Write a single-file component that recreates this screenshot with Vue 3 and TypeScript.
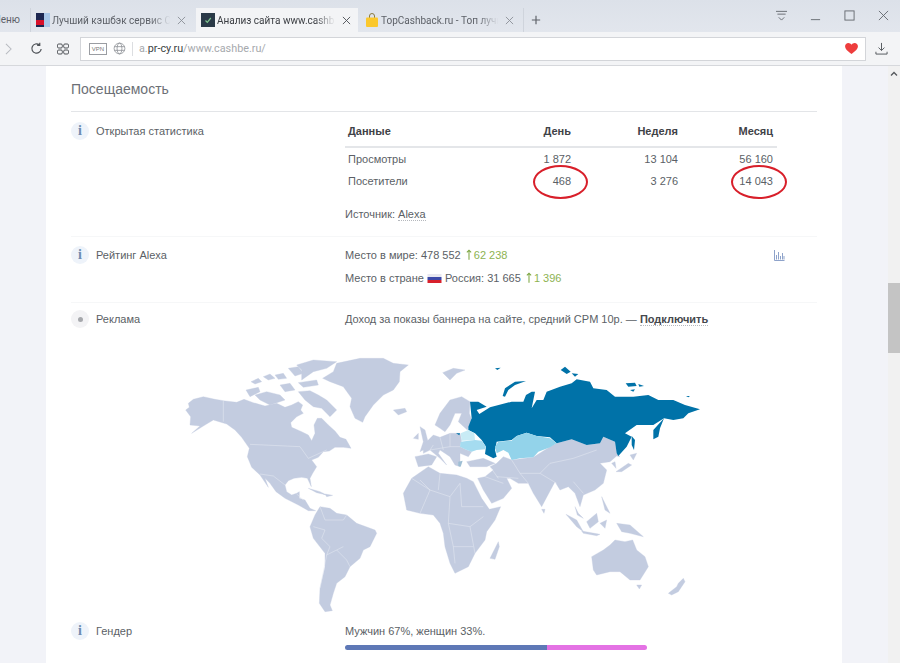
<script setup lang="ts">
interface StatRow {
  name: string
  day: string
  week: string
  month: string
}

const rows: StatRow[] = [
  { name: 'Просмотры', day: '1 872', week: '13 104', month: '56 160' },
  { name: 'Посетители', day: '468', week: '3 276', month: '14 043' }
]

// map shapes, traced in 3x coordinates
const westLand = [
  'M47,180 L58,172 L55,160 L70,148 L100,140 L135,148 L160,152 L200,157 L222,148 L250,158 L285,168 L320,160 L345,172 L365,165 L385,155 L398,165 L392,180 L400,190 L380,200 L362,218 L365,232 L395,245 L415,255 L425,272 L435,250 L432,225 L442,205 L455,205 L475,225 L495,243 L510,262 L528,268 L543,295 L520,292 L495,292 L478,303 L460,305 L445,322 L425,330 L440,350 L428,370 L420,385 L424,410 L412,385 L395,382 L372,385 L355,392 L345,405 L350,425 L365,435 L380,430 L388,425 L388,445 L405,450 L420,475 L437,482 L415,482 L385,465 L345,445 L318,425 L300,400 L285,385 L295,412 L270,375 L245,352 L232,320 L238,295 L215,262 L195,240 L170,222 L130,210 L105,225 L65,250 L90,228 L60,225 L62,200 Z',
  'M385,125 L420,122 L445,135 L470,150 L500,180 L480,200 L455,175 L430,170 L405,150 Z',
  'M228,120 L265,112 L270,125 L240,140 Z',
  'M255,135 L290,125 L330,135 L345,150 L300,165 L270,150 Z',
  'M243,95 L265,85 L275,95 L255,102 Z',
  'M280,80 L300,72 L315,85 L295,90 Z',
  'M315,75 L340,70 L350,85 L325,88 Z',
  'M355,55 L385,50 L400,70 L375,78 Z',
  'M380,45 L430,30 L500,35 L470,55 L430,65 L395,90 L395,60 Z',
  'M330,105 L360,100 L375,120 L345,125 Z',
  'M385,98 L440,90 L445,105 L400,112 Z',
  'M415,415 L450,425 L470,435 L440,428 Z',
  'M465,432 L488,436 L470,440 Z',
  'M458,85 L490,65 L500,40 L570,25 L640,25 L670,40 L715,45 L690,65 L688,95 L670,120 L640,135 L610,165 L585,200 L578,217 L555,205 L540,170 L545,145 L520,110 L480,95 Z',
  'M670,180 L705,175 L710,185 L685,195 Z',
  'M420,530 L435,495 L450,470 L480,475 L500,490 L530,495 L560,520 L615,540 L620,550 L600,590 L580,600 L570,625 L540,650 L525,680 L500,700 L490,730 L480,765 L487,782 L465,785 L448,760 L450,715 L465,650 L465,610 L430,565 Z',
  'M750,230 L765,240 L778,290 L750,305 L760,275 Z',
  'M730,265 L745,250 L745,268 Z',
  'M735,320 L775,312 L800,320 L785,345 L745,350 Z'
]

const westBorders =
  'M160,152 L160,215 M240,283 L390,290 L415,325 L470,300 M270,372 L310,378 L345,405 M450,470 L465,510 L520,510 M530,495 L520,510 M430,530 L465,540 L455,565 L480,590 L470,615 L500,600 L530,630 L540,650 M470,615 L450,715 M380,432 L400,450 M500,600 L520,590'

const eastLand = [
  'M-110,430 L-85,385 L-35,350 L0,370 L50,375 L80,385 L100,395 L125,445 L148,478 L182,470 L165,510 L140,545 L135,570 L105,610 L85,650 L45,670 L30,640 L15,590 L10,550 L0,520 L-20,495 L-60,490 L-100,480 Z',
  'M150,625 L175,575 L178,590 L165,628 Z',
  'M-15,225 L0,190 L30,150 L65,140 L90,155 L88,190 L95,210 L82,240 L55,215 L65,190 L45,190 L30,225 L15,245 L0,235 Z',
  'M-50,285 L-20,255 L0,262 L30,250 L60,250 L65,270 L60,290 L75,298 L95,305 L85,320 L60,310 L60,350 L45,345 L30,320 L0,300 L-5,310 L20,345 L0,325 L-30,300 L-50,310 Z',
  'M80,335 L130,325 L165,340 L140,350 L90,350 Z',
  'M170,340 L190,320 L215,330 L280,322 L330,290 L350,280 L395,268 L440,285 L480,280 L490,260 L525,275 L530,310 L540,320 L530,318 L510,335 L480,340 L500,360 L490,400 L465,420 L430,435 L420,470 L405,430 L385,410 L360,420 L345,395 L305,470 L280,430 L265,400 L235,400 L210,385 L200,385 L215,415 L190,445 L155,460 L130,420 L113,385 L135,380 L160,360 L150,350 Z',
  'M528,365 L565,340 L575,345 L545,365 Z',
  'M570,315 L590,310 L580,330 Z',
  'M515,340 L525,335 L528,355 Z',
  'M378,493 L410,510 L430,545 L410,530 Z',
  'M425,543 L480,553 L470,557 L430,550 Z',
  'M440,515 L470,490 L475,515 L450,535 Z',
  'M480,520 L500,510 L495,535 Z',
  'M530,520 L570,525 L610,560 L570,550 L545,545 Z',
  'M485,440 L500,470 L510,490 L495,480 Z',
  'M305,478 L315,478 L312,490 Z',
  'M405,470 L415,490 L430,505 L412,495 Z',
  'M455,620 L490,600 L510,585 L525,570 L555,575 L578,570 L590,600 L615,620 L625,650 L600,690 L570,690 L540,665 L510,665 L470,675 L460,660 Z',
  'M590,705 L605,705 L598,717 Z',
  'M685,730 L710,710 L715,700 L730,685 L735,695 L715,725 L695,735 Z',
  'M8,68 L40,55 L75,60 L50,70 L30,90 Z'
]

const eastBorders =
  'M-60,390 L-30,420 L-60,490 M-30,420 L30,440 L60,400 M30,440 L25,520 L90,530 L130,500 M60,400 L65,470 L130,470 M25,520 L40,590 L100,590 M0,370 L-5,420 M-85,385 L-30,420 M40,590 L45,640 M90,530 L105,610 M215,330 L240,370 L300,370 L350,400 M300,370 L330,340 L400,325 L470,300 M170,380 L235,385 M240,370 L265,400 M400,395 L430,430 M150,350 L175,385 M135,380 L190,400 M-30,300 L30,290 L60,290 M0,262 L10,300 M-20,285 L-30,300 M30,250 L30,290'

const russia = [
  'M85,230 L95,205 L90,155 L115,155 L140,170 L110,180 L118,192 L150,172 L215,155 L250,155 L258,135 L275,125 L285,125 L275,175 L290,150 L310,150 L320,125 L360,110 L395,100 L410,88 L450,95 L460,115 L500,120 L525,140 L580,140 L625,135 L655,150 L700,150 L735,165 L780,178 L745,190 L730,205 L700,210 L672,205 L640,225 L590,225 L555,250 L575,260 L560,290 L535,318 L530,310 L525,275 L490,260 L480,280 L440,285 L395,268 L350,280 L330,262 L290,258 L260,248 L230,258 L215,270 L170,275 L165,300 L170,320 L160,325 L135,312 L138,290 L125,270 L105,250 L85,240 Z',
  'M640,268 L640,240 L672,205 L660,235 L655,260 Z',
  'M575,258 L585,270 L582,300 L575,285 Z',
  'M188,138 L195,115 L225,95 L258,93 L225,105 L205,120 L195,140 Z',
  'M362,60 L375,50 L392,65 L380,72 Z',
  'M395,70 L415,72 L405,80 Z',
  'M557,100 L585,98 L590,108 L565,110 Z',
  'M595,102 L612,108 L598,110 Z',
  'M165,55 L182,53 L172,60 Z',
  'M570,120 L585,118 L580,125 Z',
  'M738,138 L750,138 L745,142 Z',
  'M48,250 L60,250 L58,256 Z'
]
</script>

<template>
  <div class="browser">
    <div class="tabbar">
      <div class="menu-tab">Меню</div>
      <div class="tab tab-first">
        <span class="fav fav-red"></span>
        <span class="tab-title">Лучший кэшбэк сервис С</span>
        <svg class="tab-close" viewBox="0 0 10 10"><path d="M1 1 9 9M9 1 1 9" /></svg>
      </div>
      <div class="tab tab-active">
        <span class="fav fav-check">
          <svg viewBox="0 0 14 14"><path d="M4.5 7.5 6.3 9.3 9.8 5" /></svg>
        </span>
        <span class="tab-title">Анализ сайта www.cashbe</span>
        <svg class="tab-close dark" viewBox="0 0 10 10"><path d="M1 1 9 9M9 1 1 9" /></svg>
      </div>
      <div class="tab tab-third">
        <svg class="fav" viewBox="0 0 14 14">
          <path class="bag-handle" d="M4.5 5V3a2.5 2.5 0 0 1 5 0v2" />
          <rect class="bag" x="1" y="4.5" width="12" height="9.5" rx="1" />
        </svg>
        <span class="tab-title">TopCashback.ru - Топ лучш</span>
        <svg class="tab-close" viewBox="0 0 10 10"><path d="M1 1 9 9M9 1 1 9" /></svg>
      </div>
      <svg class="new-tab" viewBox="0 0 12 12"><path d="M6 1V11M1 6H11" /></svg>
      <div class="win-controls">
        <svg viewBox="0 0 14 12" class="win-menu"><path d="M1 1.5H13M2.5 4.5H11.5M4 8 7 11 10 8" /></svg>
        <svg viewBox="0 0 12 12" class="win-min"><path d="M1 10.5H11" /></svg>
        <svg viewBox="0 0 12 12" class="win-max"><rect x="1" y="1" width="10" height="10" /></svg>
        <svg viewBox="0 0 12 12" class="win-close"><path d="M1 1 11 11M11 1 1 11" /></svg>
      </div>
    </div>

    <div class="toolbar">
      <svg class="nav-forward" viewBox="0 0 8 14"><path d="M1 1 7 7 1 13" /></svg>
      <svg class="nav-reload" viewBox="0 0 14 14"><path d="M12 7.5A5 5 0 1 1 10 3M10.5 .8V3.6H7.7" /></svg>
      <svg class="nav-grid" viewBox="0 0 12 12">
        <rect x=".5" y="1" width="4.8" height="4" rx="1.2" />
        <rect x="6.7" y="1" width="4.8" height="4" rx="1.2" />
        <rect x=".5" y="7" width="4.8" height="4" rx="1.2" />
        <rect x="6.7" y="7" width="4.8" height="4" rx="1.2" />
      </svg>
      <div class="address">
        <span class="vpn">VPN</span>
        <svg class="globe" viewBox="0 0 14 14">
          <circle cx="7" cy="7" r="5.8" />
          <ellipse cx="7" cy="7" rx="2.6" ry="5.8" />
          <path d="M1.5 5H12.5M1.5 9H12.5" />
        </svg>
        <span class="addr-sep"></span>
        <span class="url"><span class="url-dim">a.</span><span class="url-host">pr-cy.ru</span><span class="url-dim">/www.cashbe.ru/</span></span>
        <svg class="heart" viewBox="0 0 14 12"><path d="M7 12C3 9 0 6.800 0 3.600 0 1.500 1.600 0 3.600 0 5 0 6.300.8 7 2 7.700.8 9 0 10.400 0 12.400 0 14 1.500 14 3.600 14 6.800 11 9 7 12Z" /></svg>
      </div>
      <svg class="download" viewBox="0 0 14 14"><path d="M7 1V9M3.800 6 7 9.200 10.200 6M1 10.500V13H13V10.500" /></svg>
    </div>

    <div class="viewport">
      <div class="gutter"></div>
      <main class="card">
        <h2 class="section-title">Посещаемость</h2>

        <section class="row row-stats">
          <div class="row-label"><span class="badge">i</span>Открытая статистика</div>
          <div class="row-body">
            <div class="stats">
              <div class="stats-head">
                <span class="col-name">Данные</span>
                <span class="col-num col-day">День</span>
                <span class="col-num col-week">Неделя</span>
                <span class="col-num col-month">Месяц</span>
              </div>
              <div v-for="r in rows" :key="r.name" class="stats-row">
                <span class="col-name">{{ r.name }}</span>
                <span class="col-num col-day">{{ r.day }}</span>
                <span class="col-num col-week">{{ r.week }}</span>
                <span class="col-num col-month">{{ r.month }}</span>
              </div>
              <span class="circle circle-day"></span>
              <span class="circle circle-month"></span>
            </div>
            <div class="source">Источник: <span class="dotted">Alexa</span></div>
          </div>
        </section>

        <section class="row row-alexa">
          <div class="row-label"><span class="badge">i</span>Рейтинг Alexa</div>
          <div class="row-body">
            <div class="line">
              Место в мире: 478 552
              <span class="up">
                <svg viewBox="0 0 7 12"><path d="M3.500 12V1M1 3.500 3.500 1 6 3.500" /></svg>62 238
              </span>
            </div>
            <div class="line line-second">
              Место в стране
              <svg class="flag" viewBox="0 0 14 9">
                <rect width="14" height="3" fill="#e8e8f0" />
                <rect y="3" width="14" height="3" fill="#3c49a8" />
                <rect y="6" width="14" height="3" fill="#d8202c" />
              </svg>
              Россия: 31 665
              <span class="up">
                <svg viewBox="0 0 7 12"><path d="M3.500 12V1M1 3.500 3.500 1 6 3.500" /></svg>1 396
              </span>
            </div>
          </div>
          <svg class="bars-icon" viewBox="0 0 11 11">
            <path d="M.5 0V10.500H10.500M2.500 9.500V5M4.500 9.500V2M6.500 9.500V6M8.500 9.500V3M10 9.500V6" />
          </svg>
        </section>

        <section class="row row-ad">
          <div class="row-label"><span class="badge badge-grey"><i class="dot"></i></span>Реклама</div>
          <div class="row-body">
            Доход за показы баннера на сайте, средний CPM 10р. — <b class="connect">Подключить</b>
          </div>
        </section>

        <svg class="world" viewBox="0 0 1650 810" width="550" height="270">
          <g class="land">
            <path v-for="(d, i) in westLand" :key="i" :d="d" />
            <g transform="translate(810 0)">
              <path v-for="(d, i) in eastLand" :key="i" :d="d" />
            </g>
          </g>
          <path class="borders" :d="westBorders" />
          <g transform="translate(810 0)">
            <path class="borders" :d="eastBorders" />
            <path v-for="(d, i) in russia" :key="i" class="ru" :d="d" />
            <path class="kz" d="M165,290 L175,275 L215,272 L230,258 L260,248 L290,258 L330,265 L350,280 L330,292 L295,305 L280,322 L240,325 L215,330 L205,308 L190,300 L170,310 Z" />
            <path class="by" d="M62,250 L85,240 L103,250 L105,270 L65,272 Z" />
            <path class="ua" d="M62,275 L105,270 L125,272 L138,290 L135,298 L110,300 L95,305 L75,298 L60,290 Z" />
            <path class="gr" d="M55,335 L68,332 L62,350 L55,348 Z" />
          </g>
        </svg>

        <section class="row row-gender">
          <div class="row-label"><span class="badge">i</span>Гендер</div>
          <div class="row-body">
            Мужчин 67%, женщин 33%.
            <div class="gender-bar">
              <span class="male" :style="{ width: '67%' }"></span>
              <span class="female"></span>
            </div>
          </div>
        </section>
      </main>
      <div class="gutter gutter-right"></div>
      <div class="scrollbar">
        <svg class="scroll-up" viewBox="0 0 8 5"><path d="M1 4.500 4 1.500 7 4.500" /></svg>
        <div class="scroll-thumb"></div>
      </div>
    </div>
  </div>
</template>

<style scoped>
.browser {
  width: 900px;
  height: 663px;
  display: flex;
  flex-direction: column;
  overflow: hidden;
  font-family: "Liberation Sans", Arial, sans-serif;
  font-size: 11px;
  color: #5b5f66;
}

.tabbar {
  height: 32px;
  display: flex;
  align-items: flex-end;
  flex: none;
  background: linear-gradient(#dce1e9, #e2e6ed);
  font-family: Roboto, sans-serif;
  font-size: 10px;
  color: #5d6168;
}

.menu-tab {
  width: 31px;
  height: 24px;
  line-height: 24px;
  flex: none;
  overflow: hidden;
  text-indent: -8px;
  border-right: 1px solid #cfd4dc;
  box-sizing: border-box;
}

.tab {
  height: 24px;
  display: flex;
  align-items: center;
  flex: none;
  box-sizing: border-box;
}

.tab-first {
  width: 165px;
  padding: 0 10px 0 5px;
}

.tab-active {
  width: 162px;
  padding: 0 7px 0 5px;
  background: #f3f4f6;
  color: #3a3d42;
}

.tab-third {
  width: 166px;
  padding: 0 9px 0 7px;
  border-right: 1px solid #cfd4dc;
}

.fav {
  width: 14px;
  height: 14px;
  flex: none;
  margin-right: 2px;
  display: block;
}

.fav-red {
  background:
    linear-gradient(90deg, transparent 60%, #a9c7e8 60%),
    linear-gradient(#1c2650 50%, #d8102a 50%, #d8102a 85%, #1c2650 85%);
}

.fav-check {
  background: #2a3a48;
}

.fav-check svg {
  display: block;
  fill: none;
  stroke: #7fc48f;
  stroke-width: 1.2;
}

.bag {
  fill: #fbc82c;
}

.bag-handle {
  fill: none;
  stroke: #8a7a40;
  stroke-width: 1;
}

.tab-title {
  flex: 1;
  min-width: 0;
  white-space: nowrap;
  overflow: hidden;
  -webkit-mask-image: linear-gradient(90deg, #000 80%, transparent 97%);
  mask-image: linear-gradient(90deg, #000 80%, transparent 97%);
}

.tab-close {
  width: 9px;
  height: 9px;
  margin-left: 3px;
  flex: none;
  fill: none;
  stroke: #8b9097;
  stroke-width: 1;
}

.tab-close.dark {
  stroke: #4a4d52;
}

.new-tab {
  width: 10px;
  height: 10px;
  margin: 0 0 7px 7px;
  fill: none;
  stroke: #5d6168;
  stroke-width: 1.4;
}

.win-controls {
  margin-left: auto;
  align-self: stretch;
  display: flex;
  align-items: flex-start;
  padding: 10px 11px 0 0;
}

.win-controls svg {
  fill: none;
  stroke: #64686e;
  stroke-width: 1;
  display: block;
}

.win-menu {
  width: 13px;
  height: 11px;
  margin-right: 22px;
}

.win-min {
  width: 11px;
  height: 11px;
  margin-right: 23px;
}

.win-max {
  width: 11px;
  height: 11px;
  margin-right: 23px;
}

.win-close {
  width: 11px;
  height: 11px;
}

.toolbar {
  height: 34px;
  flex: none;
  display: flex;
  align-items: center;
  box-sizing: border-box;
  background: #f3f4f6;
  border-bottom: 1px solid #d6d8dc;
}

.nav-forward {
  width: 7px;
  height: 12px;
  margin-left: 5px;
  fill: none;
  stroke: #b8bbc0;
  stroke-width: 1.2;
}

.nav-reload {
  width: 13px;
  height: 13px;
  margin-left: 18px;
  fill: none;
  stroke: #4e5257;
  stroke-width: 1.3;
}

.nav-grid {
  width: 12px;
  height: 12px;
  margin-left: 14px;
  fill: none;
  stroke: #4e5257;
  stroke-width: 1;
}

.address {
  width: 786px;
  height: 24px;
  margin-left: 11px;
  box-sizing: border-box;
  display: flex;
  align-items: center;
  background: #fff;
  border: 1px solid #d3d5d9;
  flex: none;
}

.vpn {
  width: 16px;
  height: 10px;
  margin-left: 8px;
  border: 1px solid #9a9da2;
  font-size: 6px;
  line-height: 10px;
  text-align: center;
  color: #777;
}

.globe {
  width: 13px;
  height: 13px;
  margin-left: 6px;
  fill: none;
  stroke: #84888e;
  stroke-width: .8;
}

.addr-sep {
  width: 1px;
  height: 14px;
  margin: 0 6px;
  background: #dcdee1;
}

.url {
  font-family: Roboto, sans-serif;
  font-size: 10.8px;
  white-space: nowrap;
}

.url-dim {
  color: #a6a9ad;
}

.url-host {
  color: #3c3f44;
}

.heart {
  width: 13px;
  height: 11px;
  margin-left: auto;
  margin-right: 7px;
  fill: #ee3d3d;
}

.download {
  width: 13px;
  height: 13px;
  margin-left: 9px;
  fill: none;
  stroke: #4e5257;
  stroke-width: 1;
}

.viewport {
  flex: 1;
  min-height: 0;
  display: flex;
  overflow: hidden;
  background: #fff;
}

.gutter {
  width: 46px;
  flex: none;
  background: #f2f3f8;
}

.gutter-right {
  flex: 1;
}

.card {
  width: 796px;
  flex: none;
  box-sizing: border-box;
  padding: 13px 25px 0;
  background: #fff;
}

.section-title {
  margin: 0;
  height: 32px;
  line-height: 20px;
  box-sizing: content-box;
  border-bottom: 1px solid #e3e5e8;
  font-size: 14px;
  font-weight: 400;
  color: #6c7076;
}

.row {
  display: flex;
  line-height: 22px;
}

.row-label {
  width: 274px;
  flex: none;
  display: flex;
  align-items: center;
  align-self: flex-start;
  height: 22px;
  color: #5b5f66;
}

.badge {
  width: 18px;
  height: 18px;
  margin-right: 7px;
  border-radius: 50%;
  background: #eef3fa;
  display: flex;
  align-items: center;
  justify-content: center;
  font-family: "Liberation Serif", serif;
  font-size: 14px;
  font-weight: 700;
  color: #6d8cb0;
}

.badge-grey {
  background: #f3f3f5;
}

.dot {
  width: 5px;
  height: 5px;
  border-radius: 50%;
  background: #a6a8ac;
}

.row-stats {
  padding: 8px 0 11px;
  border-bottom: 1px solid #f6f7f8;
}

.row-alexa {
  padding: 7px 0 13px;
  border-bottom: 1px solid #f6f7f8;
}

.row-ad {
  padding-top: 5px;
}

.row-body {
  flex: 1;
  min-width: 0;
}

.stats {
  position: relative;
  width: 432px;
}

.stats-head,
.stats-row {
  display: flex;
}

.stats-head {
  height: 26px;
  border-bottom: 2px solid #e4e6e9;
  font-weight: 700;
  color: #3f4247;
}

.col-name {
  width: 100px;
  padding-left: 3px;
  box-sizing: border-box;
}

.col-num {
  text-align: right;
}

.col-day {
  width: 126px;
}

.col-week {
  width: 107px;
}

.col-month {
  width: 95px;
}

.circle {
  position: absolute;
  top: 45px;
  box-sizing: border-box;
  height: 34px;
  border: 2px solid #d81f2a;
  border-radius: 50%;
}

.circle-day {
  left: 188px;
  width: 55px;
}

.circle-month {
  left: 386px;
  width: 56px;
}

.source {
  margin-top: 11px;
}

.dotted {
  border-bottom: 1px dotted #b5b8bd;
}

.line-second {
  margin-top: 1px;
}

.up {
  color: #8db352;
  margin-left: 2px;
}

.up svg {
  width: 6px;
  height: 11px;
  margin-right: 2px;
  vertical-align: -1px;
  fill: none;
  stroke: #7ba53f;
  stroke-width: 1.200;
}

.flag {
  width: 15px;
  height: 9px;
  vertical-align: -1px;
}

.bars-icon {
  width: 11px;
  height: 11px;
  margin: 6px 32px 0 0;
  flex: none;
  fill: none;
  stroke: #8199c4;
  stroke-width: .9;
}

.connect {
  color: #45484d;
  border-bottom: 1px dotted #b5b8bd;
}

.world {
  display: block;
  margin: 20px 0 0 99px;
}

.land path {
  fill: #c3cce0;
  stroke: #c3cce0;
  stroke-width: 1;
}

.borders {
  fill: none;
  stroke: #e6eaf3;
  stroke-width: 1.500;
}

.ru {
  fill: #0072a8;
}

.kz {
  fill: #93d3ea;
}

.by {
  fill: #c8ebf5;
}

.ua {
  fill: #a5dcf0;
}

.gr {
  fill: #9fbfd4;
}

.gender-bar {
  display: flex;
  width: 302px;
  height: 5px;
  margin-top: 3px;
  border-radius: 3px;
  overflow: hidden;
}

.male {
  background: #5e78b6;
}

.female {
  flex: 1;
  background: #e472e4;
}

.scrollbar {
  position: relative;
  width: 12px;
  flex: none;
  background: #f1f1f1;
}

.scroll-up {
  position: absolute;
  top: 5px;
  left: 2px;
  width: 8px;
  height: 5px;
  fill: none;
  stroke: #55585c;
  stroke-width: 1.300;
}

.scroll-thumb {
  position: absolute;
  top: 217px;
  left: 0;
  width: 12px;
  height: 70px;
  background: #c4c4c4;
}
</style>
